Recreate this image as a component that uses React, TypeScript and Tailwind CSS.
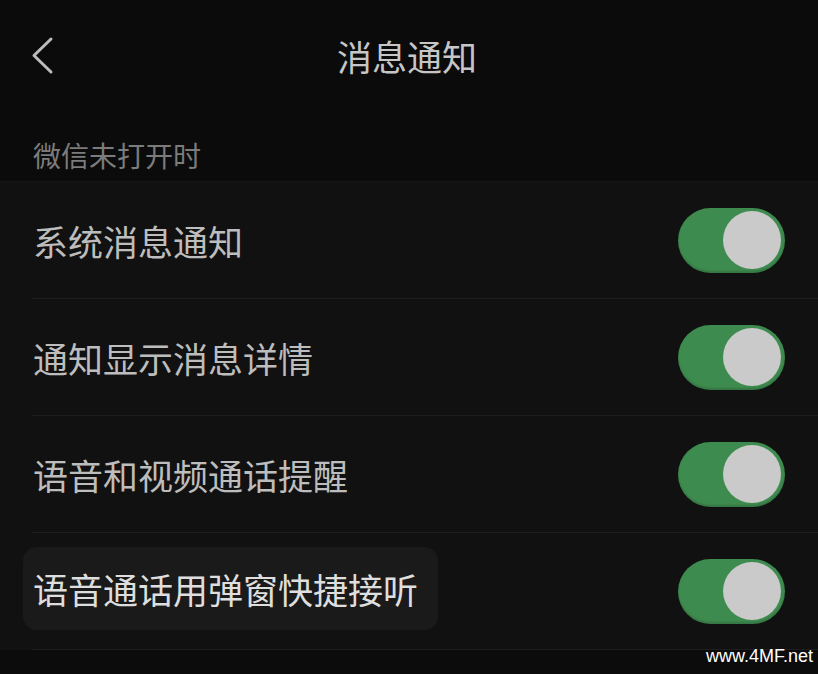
import React from "react";

const ROWS = [
  { label: "系统消息通知", on: true },
  { label: "通知显示消息详情", on: true },
  { label: "语音和视频通话提醒", on: true },
  { label: "语音通话用弹窗快捷接听", on: true, pressed: true },
];

function Toggle({ on }: { on: boolean }) {
  return (
    <div
      className={
        on
          ? "w-[107px] h-[65px] shrink-0 rounded-full bg-[#3e8b4f] flex items-center justify-end pr-[4px] shadow-[inset_0_-2px_2px_rgba(0,0,0,0.15)]"
          : "w-[107px] h-[65px] shrink-0 rounded-full bg-[#3a3a3a] flex items-center justify-start pl-[4px]"
      }
    >
      <div className="w-[58px] h-[58px] rounded-full bg-[#cacaca]" />
    </div>
  );
}

export default function App() {
  return (
    <div
      className="w-[818px] h-[674px] overflow-hidden bg-[#0b0b0b] flex flex-col"
      style={{ fontFamily: '"Noto Sans CJK SC", "Noto Sans", sans-serif' }}
    >
      {/* nav bar */}
      <div className="relative h-[110px] flex items-center justify-center shrink-0">
        <svg
          className="absolute left-[28px] top-[34px]"
          width="30"
          height="44"
          viewBox="0 0 30 44"
          fill="none"
        >
          <path
            d="M23 5 L6 21.5 L23 38"
            stroke="#bdbdbd"
            strokeWidth="3"
            strokeLinecap="round"
            strokeLinejoin="round"
          />
        </svg>
        <span className="text-[35px] leading-none text-[#c6c6c6] font-normal ml-[-4px]">
          消息通知
        </span>
      </div>

      {/* section label */}
      <div className="h-[71px] shrink-0 pl-[33px] pt-[31px]">
        <span className="text-[28px] leading-none text-[#7c7c7c]">微信未打开时</span>
      </div>

      {/* list */}
      <div className="bg-[#111111] border-t border-[#161616] shrink-0">
        {ROWS.map((row) => (
          <div key={row.label}>
            <div className="h-[116px] flex items-center justify-between pr-[33px]">
              {row.pressed ? (
                <div className="ml-[23px] h-[83px] w-[415px] shrink-0 rounded-[14px] bg-[#1a1a1a] flex items-center pl-[10px] mt-[-6px]">
                  <span className="text-[35px] leading-none text-[#dedede] whitespace-nowrap">
                    {row.label}
                  </span>
                </div>
              ) : (
                <span className="ml-[33px] text-[35px] leading-none text-[#bdbdbd] whitespace-nowrap">
                  {row.label}
                </span>
              )}
              <Toggle on={row.on} />
            </div>
            <div className="ml-[32px] h-px bg-[#1d1d1d]" />
          </div>
        ))}
      </div>

      {/* bottom */}
      <div className="relative flex-1 bg-[#0c0c0c]">
        <span
          className="absolute right-[5px] top-[-3px] text-[18px] leading-none text-white"
          style={{ fontFamily: '"Liberation Sans", Arial, sans-serif' }}
        >
          www.4MF.net
        </span>
      </div>
    </div>
  );
}
